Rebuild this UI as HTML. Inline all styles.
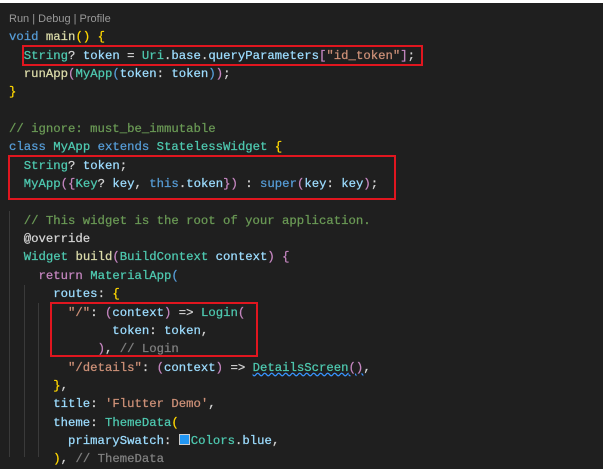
<!DOCTYPE html>
<html><head><meta charset="utf-8"><style>
html,body{margin:0;padding:0;width:603px;height:457px;overflow:hidden;background:#1f1f1f}
.top{position:absolute;left:0;top:0;width:603px;height:3px;background:#fff}
.c{position:absolute;left:9px;top:10px;font-family:"Liberation Mono",monospace;font-size:12.3px;line-height:18.35px;color:#9cdcfe;white-space:normal;-webkit-text-stroke:0.25px}
.c div{height:18.35px;white-space:pre}
.lens{font-family:"Liberation Sans",sans-serif;font-size:11px;color:#999;-webkit-text-stroke:0}
.k{color:#569cd6}.f{color:#dcdcaa}.t{color:#4ec9b0}.s{color:#ce9178}.cm{color:#6a9955}.p{color:#c586c0}.y{color:#ffd700}.w{color:#d4d4d4}.g{color:#808080}
.box{position:absolute;border:2.5px solid #e0161f;box-sizing:border-box}
.sw{display:inline-block;width:9px;height:9px;background:#2196f3;border:1px solid #ccc;margin-right:1px;vertical-align:-1px}
.sq{text-decoration:underline wavy #3794ff}
.ig{position:absolute;width:1px;background:#3a3a3a}
</style></head><body>
<div class="top"></div>
<div class="ig" style="left:9px;top:211px;height:246px"></div>
<div class="ig" style="left:24px;top:285px;height:172px"></div>
<div class="ig" style="left:38px;top:303px;height:154px"></div>
<div class="c"><div class="lens">Run | Debug | Profile</div><div><span class="k">void</span> <span class="f">main</span><span class="y">()</span> <span class="y">{</span></div><div>  <span class="t">String</span><span class="w">?</span> token <span class="w">=</span> <span class="t">Uri</span><span class="w">.</span>base<span class="w">.</span>queryParameters<span class="p">[</span><span class="s">"id_token"</span><span class="p">]</span><span class="w">;</span></div><div>  <span class="f">runApp</span><span class="p">(</span><span class="t">MyApp</span><span class="k">(</span>token<span class="w">:</span> token<span class="k">)</span><span class="p">)</span><span class="w">;</span></div><div><span class="y">}</span></div><div></div><div class="cm">// ignore: must_be_immutable</div><div><span class="k">class</span> <span class="t">MyApp</span> <span class="k">extends</span> <span class="t">StatelessWidget</span> <span class="y">{</span></div><div>  <span class="t">String</span><span class="w">?</span> token<span class="w">;</span></div><div>  <span class="t">MyApp</span><span class="p">({</span><span class="t">Key</span><span class="w">?</span> key<span class="w">,</span> <span class="k">this</span><span class="w">.</span>token<span class="p">})</span> <span class="w">:</span> <span class="k">super</span><span class="p">(</span>key<span class="w">:</span> key<span class="p">)</span><span class="w">;</span></div><div></div><div>  <span class="cm">// This widget is the root of your application.</span></div><div>  <span class="w">@override</span></div><div>  <span class="t">Widget</span> <span class="f">build</span><span class="p">(</span><span class="t">BuildContext</span> context<span class="p">)</span> <span class="p">{</span></div><div>    <span class="p">return</span> <span class="t">MaterialApp</span><span class="k">(</span></div><div>      routes<span class="w">:</span> <span class="y">{</span></div><div>        <span class="s">"/"</span><span class="w">:</span> <span class="p">(</span>context<span class="p">)</span> <span class="w">=&gt;</span> <span class="t">Login</span><span class="p">(</span></div><div>              token<span class="w">:</span> token<span class="w">,</span></div><div>            <span class="p">)</span><span class="w">,</span> <span class="g">// Login</span></div><div>        <span class="s">"/details"</span><span class="w">:</span> <span class="p">(</span>context<span class="p">)</span> <span class="w">=&gt;</span> <span class="t sq">DetailsScreen</span><span class="p sq">()</span><span class="w">,</span></div><div>      <span class="y">}</span><span class="w">,</span></div><div>      title<span class="w">:</span> <span class="s">'Flutter Demo'</span><span class="w">,</span></div><div>      theme<span class="w">:</span> <span class="t">ThemeData</span><span class="y">(</span></div><div>        primarySwatch<span class="w">:</span> <span class="sw"></span><span class="t">Colors</span><span class="w">.</span>blue<span class="w">,</span></div><div>      <span class="y">)</span><span class="w">,</span> <span class="g">// ThemeData</span></div></div>
<div class="box" style="left:22px;top:45px;width:401px;height:21px"></div>
<div class="box" style="left:8px;top:155px;width:388px;height:45px"></div>
<div class="box" style="left:50px;top:302px;width:208px;height:55px"></div>
</body></html>
